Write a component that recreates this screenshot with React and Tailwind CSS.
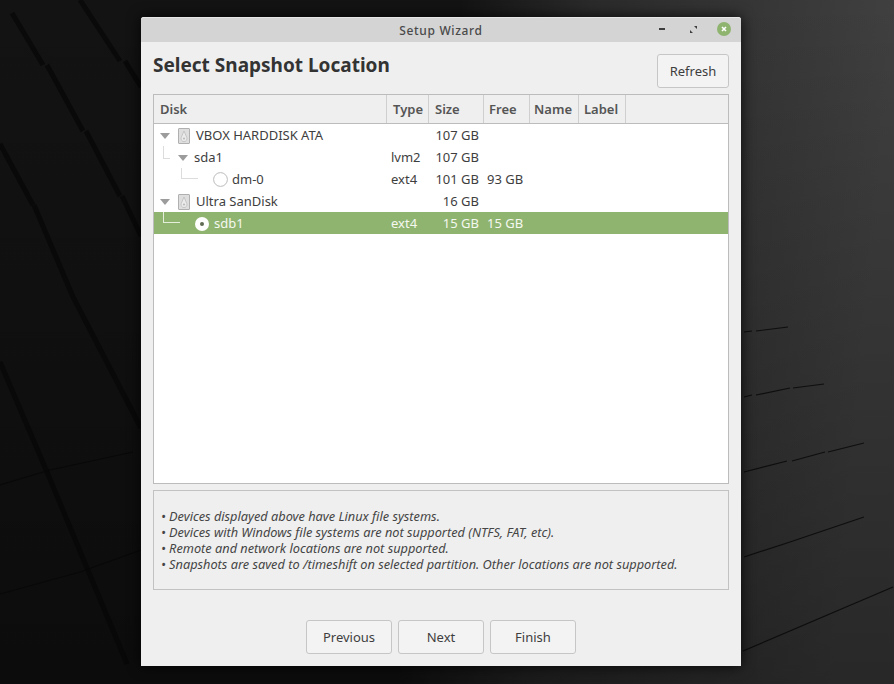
const columns = "grid-cols-[233px_42px_55px_46px_49px_47px_1fr]";

const headers = [
  { label: "Disk", pad: "pl-[6px]" },
  { label: "Type", pad: "pl-[6px]" },
  { label: "Size", pad: "pl-[6px]" },
  { label: "Free", pad: "pl-[5px]" },
  { label: "Name", pad: "pl-[4px]" },
  { label: "Label", pad: "pl-[5px]" },
];

const rows = [
  { id: "sda", name: "VBOX HARDDISK ATA", size: "107 GB", depth: 0, kind: "disk" },
  { id: "sda1", name: "sda1", type: "lvm2", size: "107 GB", depth: 1, kind: "parent" },
  { id: "dm0", name: "dm-0", type: "ext4", size: "101 GB", free: "93 GB", depth: 2, kind: "radio" },
  { id: "sdb", name: "Ultra SanDisk", size: "16 GB", depth: 0, kind: "disk" },
  { id: "sdb1", name: "sdb1", type: "ext4", size: "15 GB", free: "15 GB", depth: 1, kind: "radio", selected: true },
];

const Wallpaper = () => (
  <svg className="absolute inset-0" width="894" height="684" viewBox="0 0 894 684" fill="none">
    <defs>
      <linearGradient id="sweep" x1="460" y1="0" x2="894" y2="40" gradientUnits="userSpaceOnUse">
        <stop offset="0" stopColor="#131313" />
        <stop offset="0.3" stopColor="#2a2a2a" />
        <stop offset="1" stopColor="#404040" />
      </linearGradient>
      <linearGradient id="fade" x1="0" y1="0" x2="0" y2="684" gradientUnits="userSpaceOnUse">
        <stop offset="0" stopColor="#000000" stopOpacity="0" />
        <stop offset="1" stopColor="#000000" stopOpacity="0.38" />
      </linearGradient>
    </defs>
    <rect width="894" height="684" fill="url(#sweep)" />
    <rect width="894" height="684" fill="url(#fade)" />
    <g stroke="#070707" strokeWidth="5" opacity="0.75">
      <path d="M12 13L43 65M47 65L83 131M86 131L120 196M122 196L141 236" />
      <path d="M0 144L33 205M34 205L73 297L141 428" />
      <path d="M0 362L47 472L87 568L127 664" />
      <path d="M80 0L120 61M125 61L141 87" />
    </g>
    <g stroke="#070707" strokeWidth="1.2" opacity="0.8">
      <path d="M0 485L50 470L133 452" />
      <path d="M0 594L80 572L141 550" />
      <path d="M744 332L752 331M756 331L788 327" />
      <path d="M744 397L752 395M756 395L790 388M793 388L824 384" />
      <path d="M744 472L787 461M792 461L825 452M828 452L864 443" />
      <path d="M744 557L787 543L864 517" />
      <path d="M743 651L893 587" />
    </g>
  </svg>
);

const Arrow = () => (
  <svg width="10" height="6" viewBox="0 0 10 6" className="shrink-0">
    <path d="M0 0H10L5 6Z" fill="#9c9c9c" />
  </svg>
);

const DiskIcon = () => (
  <svg width="12" height="16" viewBox="0 0 12 16" className="shrink-0">
    <rect x="0.5" y="0.5" width="11" height="15" rx="0.5" fill="#dedede" stroke="#b0b0b0" />
    <path d="M6 3L8.8 9.5A3 3 0 1 1 3.2 9.5Z" fill="#ebebeb" stroke="#bcbcbc" strokeWidth="0.8" />
    <circle cx="6" cy="10.5" r="0.9" fill="#b0b0b0" />
  </svg>
);

const RadioIcon = ({ selected }) =>
  selected ? (
    <svg width="14" height="14" viewBox="0 0 14 14" className="shrink-0">
      <circle cx="7" cy="7" r="7" fill="#ffffff" />
      <circle cx="7" cy="7" r="2" fill="#5f6b52" />
    </svg>
  ) : (
    <svg width="15" height="15" viewBox="0 0 15 15" className="shrink-0">
      <circle cx="7.5" cy="7.5" r="6.9" fill="#ffffff" stroke="#bcbcbc" />
    </svg>
  );

const DiskCell = ({ row }) => {
  if (row.depth === 0) {
    return (
      <div className="flex items-center pl-[6px]">
        <Arrow />
        <span className="ml-[8px] flex"><DiskIcon /></span>
        <span className="ml-[6px]">{row.name}</span>
      </div>
    );
  }
  if (row.kind === "parent") {
    return (
      <div className="relative flex items-center h-full pl-[24px]">
        <span className="absolute left-[9px] top-[-1px] w-[7px] h-[13px] border-b border-l border-[#dcdcdc]" />
        <Arrow />
        <span className="ml-[6px]">{row.name}</span>
      </div>
    );
  }
  if (row.selected) {
    return (
      <div className="relative flex items-center h-full pl-[41px]">
        <span className="absolute left-[9px] top-[-1px] w-[17px] h-[11px] border-b border-l border-[#e4eedb]" />
        <RadioIcon selected />
        <span className="ml-[5px]">{row.name}</span>
      </div>
    );
  }
  return (
    <div className="relative flex items-center h-full pl-[59px]">
      <span className="absolute left-[27px] top-[-1px] w-[17px] h-[11px] border-b border-l border-[#dcdcdc]" />
      <RadioIcon />
      <span className="ml-[4px]">{row.name}</span>
    </div>
  );
};

const Button = ({ children, className }) => (
  <button className={`h-[34px] pt-px rounded-[3px] border border-[#c6c6c6] bg-[#f3f3f3] text-[13px] text-[#3e3e3e] ${className}`}>
    {children}
  </button>
);

export default function App() {
  return (
    <div className="relative w-[894px] h-[684px] overflow-hidden bg-[#141414] font-['Noto_Sans',sans-serif]">
      <Wallpaper />
      <div className="relative pt-[17px] pl-[141px]">
        <div className="w-[600px] h-[649px] flex flex-col bg-[#efefef] rounded-t-[3px] shadow-[0_0_14px_rgba(0,0,0,0.8)]">
          <div className="relative h-[25px] pt-px shrink-0 flex items-center justify-center rounded-t-[3px] border-t border-[#e6e6e6] bg-[#d4d4d4] text-[12px] font-medium text-[#4a4a4a] tracking-[0.65px]">
            Setup Wizard
            <div className="absolute right-[10px] top-[-1px] h-full flex items-center">
              <span className="w-[6px] h-[2px] bg-[#3e3e3e] mr-[25px]" />
              <svg width="7" height="7" viewBox="0 0 7 7" className="mr-[20px]">
                <path d="M4 0H7V3ZM3 7H0V4Z" fill="#3e3e3e" />
              </svg>
              <svg width="14" height="14" viewBox="0 0 14 14">
                <circle cx="7" cy="7" r="7" fill="#8fb46f" />
                <path d="M5 5L9 9M9 5L5 9" stroke="#ffffff" strokeWidth="1.6" />
              </svg>
            </div>
          </div>

          <div className="flex-1 flex flex-col px-[12px]">
            <div className="h-[52px] shrink-0 flex justify-between pt-[12px]">
              <h1 className="text-[19px] leading-[22px] font-bold text-[#333333]">Select Snapshot Location</h1>
              <Button className="w-[72px]">Refresh</Button>
            </div>

            <div className="h-[390px] shrink-0 flex flex-col border border-[#bcbcbc] bg-white">
              <div className={`grid ${columns} h-[29px] shrink-0 bg-[#efefef] border-b border-[#bcbcbc] text-[13px] font-semibold text-[#555555]`}>
                {headers.map((h) => (
                  <div key={h.label} className={`flex items-center pt-px ${h.pad} border-r border-[#cfcfcf]`}>{h.label}</div>
                ))}
              </div>
              {rows.map((row) => (
                <div
                  key={row.id}
                  className={`grid ${columns} h-[22px] pt-px items-center text-[13px] ${row.selected ? "bg-[#8fb46f] text-[#f4f8f0]" : "text-[#3e3e3e]"}`}
                >
                  <DiskCell row={row} />
                  <div className="pl-[4px]">{row.type}</div>
                  <div className="text-right pr-[5px]">{row.size}</div>
                  <div className="pl-[3px]">{row.free}</div>
                </div>
              ))}
            </div>

            <div className="h-[100px] mt-[6px] shrink-0 flex flex-col justify-center border border-[#c2c2c2] pl-[7px] text-[12.75px] leading-[16px] italic text-[#454545]">
              <p>• Devices displayed above have Linux file systems.</p>
              <p>• Devices with Windows file systems are not supported (NTFS, FAT, etc).</p>
              <p>• Remote and network locations are not supported.</p>
              <p>• Snapshots are saved to /timeshift on selected partition. Other locations are not supported.</p>
            </div>

            <div className="mt-[30px] flex justify-center gap-[6px]">
              <Button className="w-[86px]">Previous</Button>
              <Button className="w-[86px]">Next</Button>
              <Button className="w-[86px]">Finish</Button>
            </div>
          </div>
        </div>
      </div>
    </div>
  );
}
